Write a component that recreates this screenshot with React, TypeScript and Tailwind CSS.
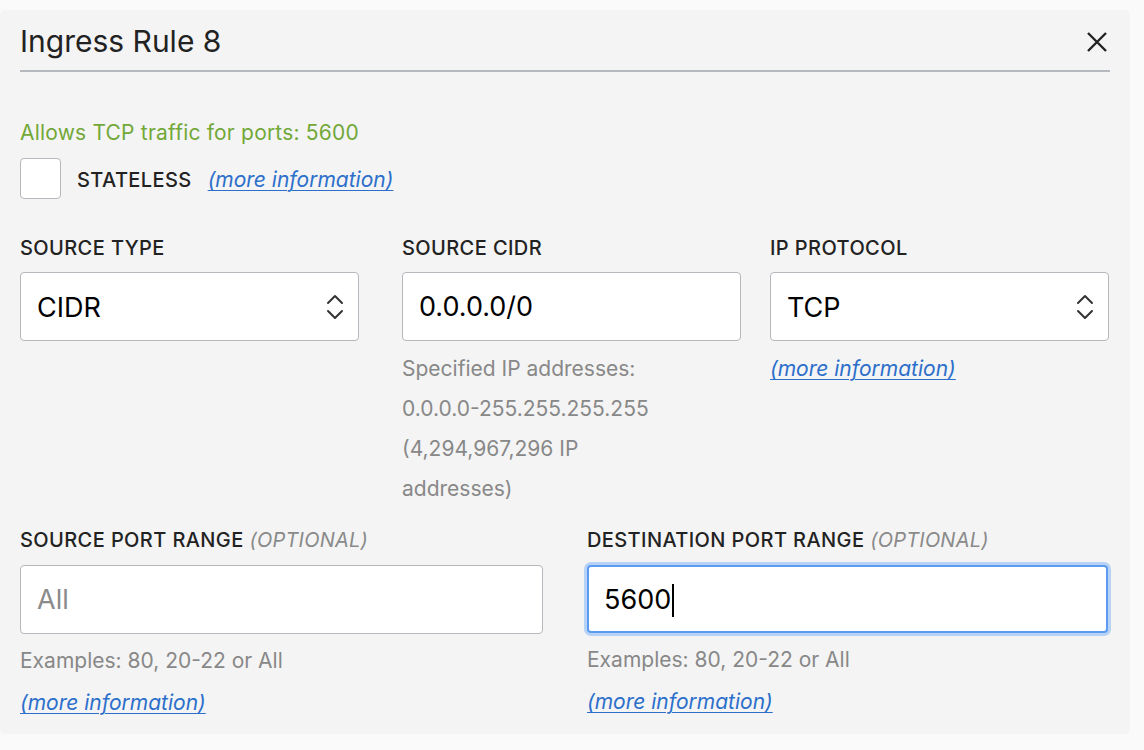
import React from 'react';

const font = { fontFamily: 'Inter, "Noto Sans", sans-serif' };

const MoreInfo = () => (
    <a href="#" className="italic text-[#2c6fcb] underline underline-offset-[3px] decoration-1">(more information)</a>
);

const Label = ({ text, optional }: { text: string; optional?: boolean }) => (
    <div className="text-[20px] leading-[24px] font-medium text-[#222] tracking-[0.4px]">
        {text}
        {optional && <span className="italic font-normal text-[#8a8a8a] tracking-[0.2px]"> (OPTIONAL)</span>}
    </div>
);

const SelectBox = ({ value }: { value: string }) => (
    <div className="mt-[12px] h-[69px] bg-white border-[1.5px] border-[#b5b8bc] rounded-[4px] flex items-center justify-between pl-[16px] pr-[14px]">
        <span className="text-[27px] text-black pt-[3px]">{value}</span>
        <svg width="18" height="26" viewBox="0 0 18 26" fill="none" stroke="#333" strokeWidth="2" strokeLinecap="round" strokeLinejoin="round">
            <path d="M2 9 L9 2 L16 9" />
            <path d="M2 17 L9 24 L16 17" />
        </svg>
    </div>
);

const TextBox = ({ value, placeholder, focused }: { value?: string; placeholder?: string; focused?: boolean }) => (
    <div
        className={
            focused
                ? 'h-[68px] bg-white border-2 border-[#5c9cf0] rounded-[4px] ring-[3px] ring-[#b7d2f7] flex items-center pl-[15px]'
                : 'h-[69px] bg-white border-[1.5px] border-[#b5b8bc] rounded-[4px] flex items-center pl-[16px]'
        }
    >
        {value ? (
            <span className="text-[27px] text-black flex items-center pt-[2px]">
                {value}
                {focused && <span className="inline-block w-[1.5px] h-[33px] bg-black ml-[1px]" />}
            </span>
        ) : (
            <span className="text-[27px] text-[#8a8a8a] pt-[2px]">{placeholder}</span>
        )}
    </div>
);

const Helper = ({ children }: { children: React.ReactNode }) => (
    <div className="text-[21px] leading-[40px] text-[#888]">{children}</div>
);

export default function App() {
    return (
        <div className="min-h-[750px] bg-[#fafafa] pt-[10px] pr-[14px]" style={font}>
            <div className="bg-[#f4f4f4] rounded-[5px] px-[20px] pt-[15px] pb-[11px]">
                <div className="flex items-center justify-between h-[32px]">
                    <h1 className="text-[30px] leading-[32px] text-[#222]">Ingress Rule 8</h1>
                    <svg width="20" height="20" viewBox="0 0 20 20" className="mr-[3px] mt-[2px]" stroke="#222" strokeWidth="2.4">
                        <path d="M1 1 L19 19 M19 1 L1 19" />
                    </svg>
                </div>
                <div className="mt-[13px] h-[2px] bg-[#b5b8bc]" />

                <div className="mt-[49px] text-[21px] leading-[24px] text-[#72a838] tracking-[0.2px]">Allows TCP traffic for ports: 5600</div>
                <div className="mt-[13px] flex items-center">
                    <div className="w-[41px] h-[41px] bg-white border-[1.5px] border-[#b5b8bc] rounded-[4px]" />
                    <span className="ml-[16px] mt-[3px] text-[20px] font-medium text-[#222] tracking-[0.4px]">STATELESS</span>
                    <span className="ml-[16px] mt-[3px] text-[21px]"><MoreInfo /></span>
                </div>

                <div className="mt-[37px] flex">
                    <div className="w-[339px]">
                        <Label text="SOURCE TYPE" />
                        <SelectBox value="CIDR" />
                    </div>
                    <div className="w-[339px] ml-[43px]">
                        <Label text="SOURCE CIDR" />
                        <div className="mt-[12px]"><TextBox value="0.0.0.0/0" /></div>
                        <div className="mt-[8px]">
                            <Helper>Specified IP addresses:</Helper>
                            <Helper>0.0.0.0-255.255.255.255</Helper>
                            <Helper>(4,294,967,296 IP</Helper>
                            <Helper>addresses)</Helper>
                        </div>
                    </div>
                    <div className="w-[339px] ml-[29px]">
                        <Label text="IP PROTOCOL" />
                        <SelectBox value="TCP" />
                        <div className="mt-[8px] text-[21px] leading-[40px]"><MoreInfo /></div>
                    </div>
                </div>

                <div className="mt-[19px] flex">
                    <div className="w-[523px]">
                        <Label text="SOURCE PORT RANGE" optional />
                        <div className="mt-[13px]"><TextBox placeholder="All" /></div>
                        <div className="mt-[7px]"><Helper>Examples: 80, 20-22 or All</Helper></div>
                        <div className="mt-[2px] text-[21px] leading-[40px]"><MoreInfo /></div>
                    </div>
                    <div className="w-[521px] ml-[44px]">
                        <Label text="DESTINATION PORT RANGE" optional />
                        <div className="mt-[13px]"><TextBox value="5600" focused /></div>
                        <div className="mt-[7px]"><Helper>Examples: 80, 20-22 or All</Helper></div>
                        <div className="mt-[2px] text-[21px] leading-[40px]"><MoreInfo /></div>
                    </div>
                </div>
            </div>
        </div>
    );
}
